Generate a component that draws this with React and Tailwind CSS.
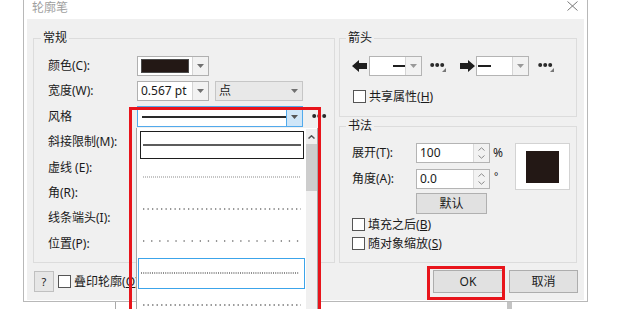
import React from 'react';

const Tri = ({ color = '#707070' }) => (
  <svg width="7" height="4" viewBox="0 0 7 4"><path d="M0 0h7L3.5 4z" fill={color} /></svg>
);

const Chevron = ({ up = true, color = '#8a8a8a', sw = 1 }) => (
  <svg width="7" height="4" viewBox="0 0 7 4">
    <path d={up ? 'M0.5 3.5L3.5 0.8L6.5 3.5' : 'M0.5 0.5L3.5 3.2L6.5 0.5'} fill="none" stroke={color} strokeWidth={sw} />
  </svg>
);

const Dots = ({ className = '', corner = false }) => (
  <svg className={className} width="16" height="12" viewBox="0 0 16 12">
    <circle cx="2.2" cy="5" r="2" fill="#2a2a2a" />
    <circle cx="7.2" cy="5" r="2" fill="#2a2a2a" />
    <circle cx="12.2" cy="5" r="2" fill="#2a2a2a" />
    {corner && <path d="M16 8v4h-4z" fill="#777" />}
  </svg>
);

const ArrowIcon = ({ right = false }) => (
  <svg width="16" height="12" viewBox="0 0 16 12">
    <path d={right ? 'M16 6L9 0v3H1v6h8v3z' : 'M0 6l7-6v3h8v6H7v3z'} fill="#1e1e1e" />
  </svg>
);

function Check({ label, mn, className = '' }) {
  return (
    <div className={`flex items-center h-[13px] ${className}`}>
      <div className="w-[13px] h-[13px] border border-[#555] bg-white shrink-0" />
      <span className="ml-[3px] whitespace-nowrap">{label}(<span className="underline">{mn}</span>)</span>
    </div>
  );
}

function Row({ label, children }) {
  return (
    <div className="flex items-center h-[20px]">
      <span className="w-[89px] shrink-0 whitespace-nowrap">{label}</span>
      {children}
    </div>
  );
}

function Spinner({ value }) {
  return (
    <div className="flex w-[74px] h-[20px] border border-[#b4b4b4] bg-white">
      <div className="flex-1 pl-[3px] flex items-center">{value}</div>
      <div className="w-[16px] border-l border-[#dadada] bg-[#f2f2f2] flex flex-col items-center justify-center gap-[4px]">
        <Chevron up />
        <Chevron up={false} />
      </div>
    </div>
  );
}

const listItems = [
  { box: 'ml-[3px] w-[164px] h-[28px] border border-[#1e1e1e]', dash: null, color: '#262626', w: 1.6 },
  { box: 'ml-[3px] w-[164px] h-[28px] border border-transparent', dash: '1 1', color: '#8c8c8c', w: 1.2 },
  { box: 'ml-[3px] w-[164px] h-[28px] border border-transparent', dash: '1.3 3.2', color: '#2e2e2e', w: 1.2 },
  { box: 'ml-[3px] w-[164px] h-[28px] border border-transparent', dash: '1.3 6.8', color: '#2e2e2e', w: 1.2 },
  { box: 'ml-[1px] w-[167px] h-[31px] border border-[#3ca4ea]', dash: '1 1.2', color: '#1e1e1e', w: 1.2 },
  { box: 'ml-[3px] w-[164px] h-[28px] border border-transparent', dash: '1.5 3', color: '#3a3a3a', w: 1.2 },
];

export default function App() {
  return (
    <div className="relative w-[620px] h-[309px] overflow-hidden bg-white text-[12px] leading-[16px] text-[#1a1a1a] font-['Noto_Sans','Noto_Sans_CJK_SC',sans-serif]">
      {/* dialog window */}
      <div className="ml-[23px] w-[565px] h-[302px] border-x border-b border-[#b8b8b8] bg-white flex flex-col px-[3px] pb-[1px]">
        <div className="h-[19px] shrink-0 flex items-start justify-between pl-[5px] pr-[6px]">
          <span className="text-[#a0a0a0]">轮廓笔</span>
          <svg className="mt-[1px]" width="11" height="10" viewBox="0 0 11 10">
            <path d="M0.5 0.5L10.5 9.5M10.5 0.5L0.5 9.5" stroke="#7a7a7a" strokeWidth="1" />
          </svg>
        </div>

        <div className="flex-1 bg-[#f0f0f0] flex flex-col">
          <div className="flex gap-[4px] pt-[11px] pl-[6px]">
            {/* 常规 */}
            <fieldset className="w-[302px] h-[233px] border border-[#dcdcdc]">
              <legend className="ml-[7px] px-[2px] leading-[16px]">常规</legend>
              <div className="flex flex-col gap-[5.4px] pl-[14px] pt-[10px]">
                <Row label="颜色(C):">
                  <div className="flex w-[72px] h-[20px] border border-[#b0b0b0] bg-white">
                    <div className="flex-1 flex px-[3px] py-[2px]">
                      <div className="flex-1 bg-[#231815] border border-[#4a4a4a]" />
                    </div>
                    <div className="w-[16px] border-l border-[#d5d5d5] bg-[#f2f2f2] flex items-center justify-center"><Tri /></div>
                  </div>
                </Row>
                <Row label="宽度(W):">
                  <div className="flex w-[72px] h-[20px] border border-[#b0b0b0] bg-white">
                    <div className="flex-1 flex items-center pl-[3px] whitespace-nowrap">0.567 pt</div>
                    <div className="w-[16px] border-l border-[#d5d5d5] bg-[#f2f2f2] flex items-center justify-center"><Tri /></div>
                  </div>
                  <div className="ml-[6px] flex items-center justify-between w-[88px] h-[20px] border border-[#c6c6c6] bg-[#e8e8e8] pl-[3px] pr-[4px]">
                    <span>点</span>
                    <Tri />
                  </div>
                </Row>
                <Row label="风格">
                  <div className="flex w-[166px] h-[21px] border border-[#52aaec] bg-white">
                    <div className="flex-1 flex items-center pl-[4px]">
                      <div className="w-full h-[1.5px] bg-[#2a2a2a]" />
                    </div>
                    <div className="w-[16px] border-l border-[#52aaec] bg-[#cfe6f8] flex items-center justify-center"><Tri color="#555" /></div>
                  </div>
                  <Dots className="ml-[9px]" />
                </Row>
                <Row label="斜接限制(M):" />
                <Row label="虚线 (E):" />
                <Row label="角(R):" />
                <Row label="线条端头(I):" />
                <Row label="位置(P):" />
              </div>
            </fieldset>

            <div className="w-[238px] flex flex-col">
              {/* 箭头 */}
              <fieldset className="h-[87px] border border-[#dcdcdc]">
                <legend className="ml-[6px] px-[2px] leading-[16px]">箭头</legend>
                <div className="pl-[12px] pt-[10px]">
                  <div className="flex items-center h-[20px]">
                    <ArrowIcon />
                    <div className="ml-[1px] flex w-[53px] h-[20px] border border-[#b4b4b4] bg-white">
                      <div className="flex-1 flex items-center justify-end"><div className="w-[12px] h-[2px] bg-[#1e1e1e]" /></div>
                      <div className="w-[16px] border-l border-[#d5d5d5] bg-[#f2f2f2] flex items-center justify-center"><Tri color="#999" /></div>
                    </div>
                    <Dots className="ml-[8px]" corner />
                    <div className="ml-[13px]"><ArrowIcon right /></div>
                    <div className="ml-[1px] flex w-[53px] h-[20px] border border-[#b4b4b4] bg-white">
                      <div className="flex-1 flex items-center pl-[1px]"><div className="w-[13px] h-[2px] bg-[#1e1e1e]" /></div>
                      <div className="w-[16px] border-l border-[#d5d5d5] bg-[#f2f2f2] flex items-center justify-center"><Tri color="#999" /></div>
                    </div>
                    <Dots className="ml-[9px]" corner />
                  </div>
                  <Check className="mt-[14px] ml-[1px]" label="共享属性" mn="H" />
                </div>
              </fieldset>

              {/* 书法 */}
              <fieldset className="mt-[1px] h-[145px] border border-[#dcdcdc]">
                <legend className="ml-[6px] px-[2px] leading-[16px]">书法</legend>
                <div className="pl-[12px] pt-[9px]">
                  <div className="flex">
                    <div className="w-[163px] flex flex-col">
                      <div className="flex items-center h-[20px]">
                        <span className="w-[64px] shrink-0">展开(T):</span>
                        <Spinner value="100" />
                        <span className="ml-[3px]">%</span>
                      </div>
                      <div className="mt-[6px] flex items-center h-[20px]">
                        <span className="w-[64px] shrink-0">角度(A):</span>
                        <Spinner value="0.0" />
                        <span className="ml-[4px] self-start text-[10px] leading-[14px]">°</span>
                      </div>
                      <button className="mt-[4px] ml-[64px] w-[71px] h-[21px] border border-[#b0b0b0] bg-[#e1e1e1] flex items-center justify-center">默认</button>
                    </div>
                    <div className="w-[55px] h-[47px] border border-[#d3d3d3] bg-white flex items-center justify-center">
                      <div className="w-[33px] h-[32px] bg-[#231815]" />
                    </div>
                  </div>
                  <Check className="mt-[4px]" label="填充之后" mn="B" />
                  <Check className="mt-[6px]" label="随对象缩放" mn="S" />
                </div>
              </fieldset>
            </div>
          </div>

          {/* bottom buttons */}
          <div className="mt-[7px] h-[23px] flex items-center pl-[7px] pr-[6px]">
            <button className="w-[20px] h-[21px] border border-[#c0c0c0] bg-[#e6e6e6] flex items-center justify-center text-[11px]">?</button>
            <Check className="ml-[4px]" label="叠印轮廓" mn="O" />
            <div className="flex-1" />
            <button className="w-[70px] h-[23px] border border-[#adadad] bg-[#e1e1e1] flex items-center justify-center">OK</button>
            <button className="ml-[6px] w-[69px] h-[23px] border border-[#adadad] bg-[#e1e1e1] flex items-center justify-center">取消</button>
          </div>
        </div>
      </div>

      {/* window behind the dialog */}
      <div className="flex h-[7px]">
        <div className="ml-[115px] w-px bg-[#a9a9a9]" />
        <div className="ml-[391px] w-[5px] bg-[#c4c4c4]" />
      </div>

      {/* open style drop-down list */}
      <div className="absolute left-[136px] top-[128px] w-[182px] h-[190px] bg-white border-l border-[#646464] border-r border-[#a8a8a8] flex pt-[1px]">
        <div className="w-[169px] flex flex-col">
          {listItems.map((it, i) => (
            <div key={i} className="h-[32px] flex items-center shrink-0">
              <div className={`${it.box} flex items-center px-[2px]`}>
                <svg width="158" height="2" viewBox="0 0 158 2">
                  <line x1="0" y1="1" x2="158" y2="1" stroke={it.color} strokeWidth={it.w} strokeDasharray={it.dash || undefined} />
                </svg>
              </div>
            </div>
          ))}
        </div>
        <div className="w-[11px] bg-[#f0f0f0] flex flex-col">
          <div className="h-[15px] flex items-center justify-center"><Chevron up color="#555" sw={1.5} /></div>
          <div className="h-[47px] bg-[#cdcdcd]" />
        </div>
      </div>

      {/* red highlight boxes */}
      <div className="absolute left-[129px] top-[107px] w-[192px] h-[220px] border-[3px] border-[#e8141b]" />
      <div className="absolute left-[427px] top-[266px] w-[78px] h-[34px] border-[3px] border-[#e8141b]" />
    </div>
  );
}
